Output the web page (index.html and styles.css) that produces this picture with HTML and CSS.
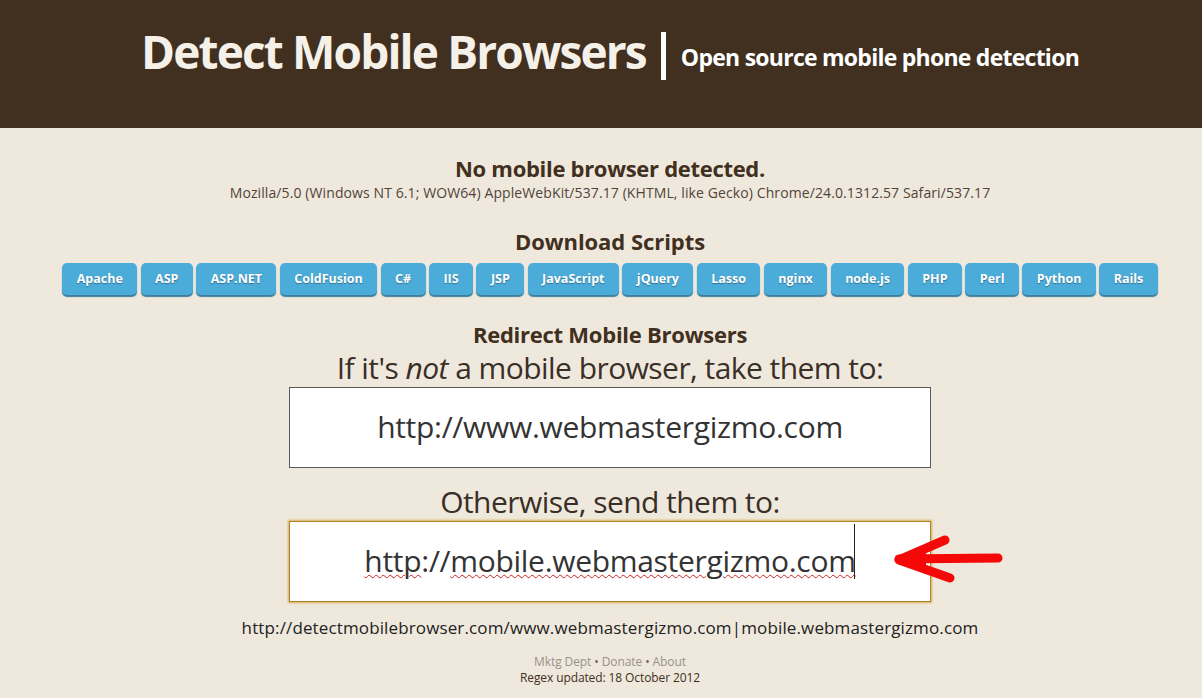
FILE: index.html
```html
<!DOCTYPE html>
<html lang="en">
<head>
    <meta charset="UTF-8">
    <meta name="viewport" content="width=device-width, initial-scale=1.0">
    <title>Detect Mobile Browsers</title>
    <link rel="stylesheet" href="styles.css">
</head>
<body>

<div class="page">
    <header class="masthead">
        <h1 class="title">Detect Mobile Browsers</h1>
        <span class="divider"></span>
        <span class="tagline">Open source mobile phone detection</span>
    </header>

    <section class="status">
        <h2 class="status-head">No mobile browser detected.</h2>
        <p class="agent">Mozilla/5.0 (Windows NT 6.1; WOW64) AppleWebKit/537.17 (KHTML, like Gecko) Chrome/24.0.1312.57 Safari/537.17</p>
    </section>

    <section class="downloads">
        <h2 class="downloads-head">Download Scripts</h2>
        <div class="buttons">
            <a class="btn">Apache</a>
            <a class="btn">ASP</a>
            <a class="btn">ASP.NET</a>
            <a class="btn">ColdFusion</a>
            <a class="btn">C#</a>
            <a class="btn">IIS</a>
            <a class="btn">JSP</a>
            <a class="btn">JavaScript</a>
            <a class="btn">jQuery</a>
            <a class="btn">Lasso</a>
            <a class="btn">nginx</a>
            <a class="btn">node.js</a>
            <a class="btn">PHP</a>
            <a class="btn">Perl</a>
            <a class="btn">Python</a>
            <a class="btn">Rails</a>
        </div>
    </section>

    <section class="redirect">
        <h2 class="redirect-head">Redirect Mobile Browsers</h2>
        <p class="prompt">If it's <em>not</em> a mobile browser, take them to:</p>
        <div class="field">http://www.webmastergizmo.com</div>
        <p class="prompt prompt-second">Otherwise, send them to:</p>
        <div class="field field-focus">
            <span class="typed"><span class="typo">http</span>://<span class="typo">mobile.webmastergizmo.com</span><span class="caret"></span></span>
            <!-- hand drawn arrow on top of the screenshot -->
            <svg class="arrow" width="112" height="50" viewBox="0 0 112 50">
                <polygon class="arrow-tip" points="5,26 32,14 32,35" />
                <path d="M5 25 L 104 24" />
                <path d="M51 6 L 5 26 L 56 44" />
            </svg>
        </div>
        <p class="result">http://detectmobilebrowser.com/www.webmastergizmo.com|mobile.webmastergizmo.com</p>
    </section>

    <footer class="foot">
        <p class="foot-links"><a>Mktg Dept</a> <span class="dot">•</span> <a>Donate</a> <span class="dot">•</span> <a>About</a></p>
        <p class="foot-date">Regex updated: 18 October 2012</p>
    </footer>
</div>

</body>
</html>
```

FILE: styles.css
```css
* {
    box-sizing: border-box;
}

html, body {
    margin: 0;
    padding: 0;
    height: 698px;
    overflow: hidden;
    background-color: #efe9dd;
}

h1, h2, p {
    margin: 0;
}

/* page is wider than the window, the screenshot cuts it on the right */
.page {
    width: 1220px;
    font-family: "Open Sans", sans-serif;
    color: #412f20;
    text-align: center;
}

.masthead {
    height: 128px;
    background-color: #412f20;
    display: flex;
    justify-content: center;
    align-items: flex-start;
    padding-top: 24px;
}

.title {
    font-size: 46px;
    line-height: 54px;
    font-weight: 700;
    letter-spacing: -1.85px;
    color: #f5f1e8;
}

.divider {
    width: 5px;
    height: 48px;
    margin: 8px 15px 0 15px;
    background-color: #fff;
}

.tagline {
    font-size: 23px;
    line-height: 30px;
    font-weight: 700;
    letter-spacing: -0.75px;
    color: #fff;
    margin-top: 18px;
}

.status {
    padding-top: 26px;
}

.status-head {
    font-size: 22px;
    line-height: 28px;
    font-weight: 700;
    letter-spacing: -0.3px;
}

.agent {
    font-size: 14px;
    line-height: 20px;
    letter-spacing: 0.1px;
    margin-top: 1px;
    color: #52443a;
}

.downloads {
    padding-top: 24px;
}

.downloads-head {
    font-size: 22px;
    line-height: 28px;
    font-weight: 700;
    letter-spacing: -0.05px;
}

.buttons {
    display: flex;
    justify-content: center;
    gap: 3.5px;
    margin-top: 8px;
}

.btn {
    display: block;
    height: 32px;
    line-height: 31px;
    padding: 0 14.4px;
    background-color: #4cacd9;
    border-radius: 5px;
    box-shadow: 0 2px 1px #3d7f9e;
    color: #fff;
    font-size: 12.5px;
    font-weight: 700;
    text-shadow: 0 1px 1px rgba(0, 0, 0, 0.35);
}

.redirect {
    padding-top: 26px;
}

.redirect-head {
    font-size: 22px;
    line-height: 27px;
    font-weight: 700;
    letter-spacing: -0.25px;
}

.prompt {
    font-size: 30px;
    line-height: 39px;
    letter-spacing: -0.55px;
    color: #3a2f28;
}

.prompt-second {
    margin-top: 14px;
}

.field {
    position: relative;
    width: 642px;
    height: 81px;
    margin: 0 auto;
    display: flex;
    justify-content: center;
    align-items: center;
    padding-bottom: 2px;
    background-color: #fff;
    border: 1px solid #5a5a5a;
    font-size: 30px;
    letter-spacing: -0.3px;
    color: #333;
}

.field-focus {
    border-color: #ad8428;
    box-shadow: 0 0 2px 1px #d9ad55;
}

.typed {
    position: relative;
}

.typo {
    text-decoration: underline wavy #d02020 1px;
    text-underline-offset: 2px;
}

.caret {
    position: absolute;
    right: 1px;
    top: -16px;
    width: 1px;
    height: 55px;
    background-color: #222;
}

.arrow {
    position: absolute;
    left: 604px;
    top: 12px;
}

.arrow path {
    fill: none;
    stroke: #f50808;
    stroke-width: 9;
    stroke-linecap: round;
    stroke-linejoin: round;
}

.arrow-tip {
    fill: #f50808;
}

.result {
    margin-top: 14px;
    font-size: 17px;
    line-height: 23px;
    letter-spacing: 0.13px;
    color: #222;
}

.foot {
    margin-top: 15px;
    font-size: 12px;
    line-height: 16px;
    letter-spacing: -0.1px;
}

.foot-links {
    color: #999188;
}

.dot {
    color: #6b6258;
}

.foot-date {
    color: #412f20;
}
```
